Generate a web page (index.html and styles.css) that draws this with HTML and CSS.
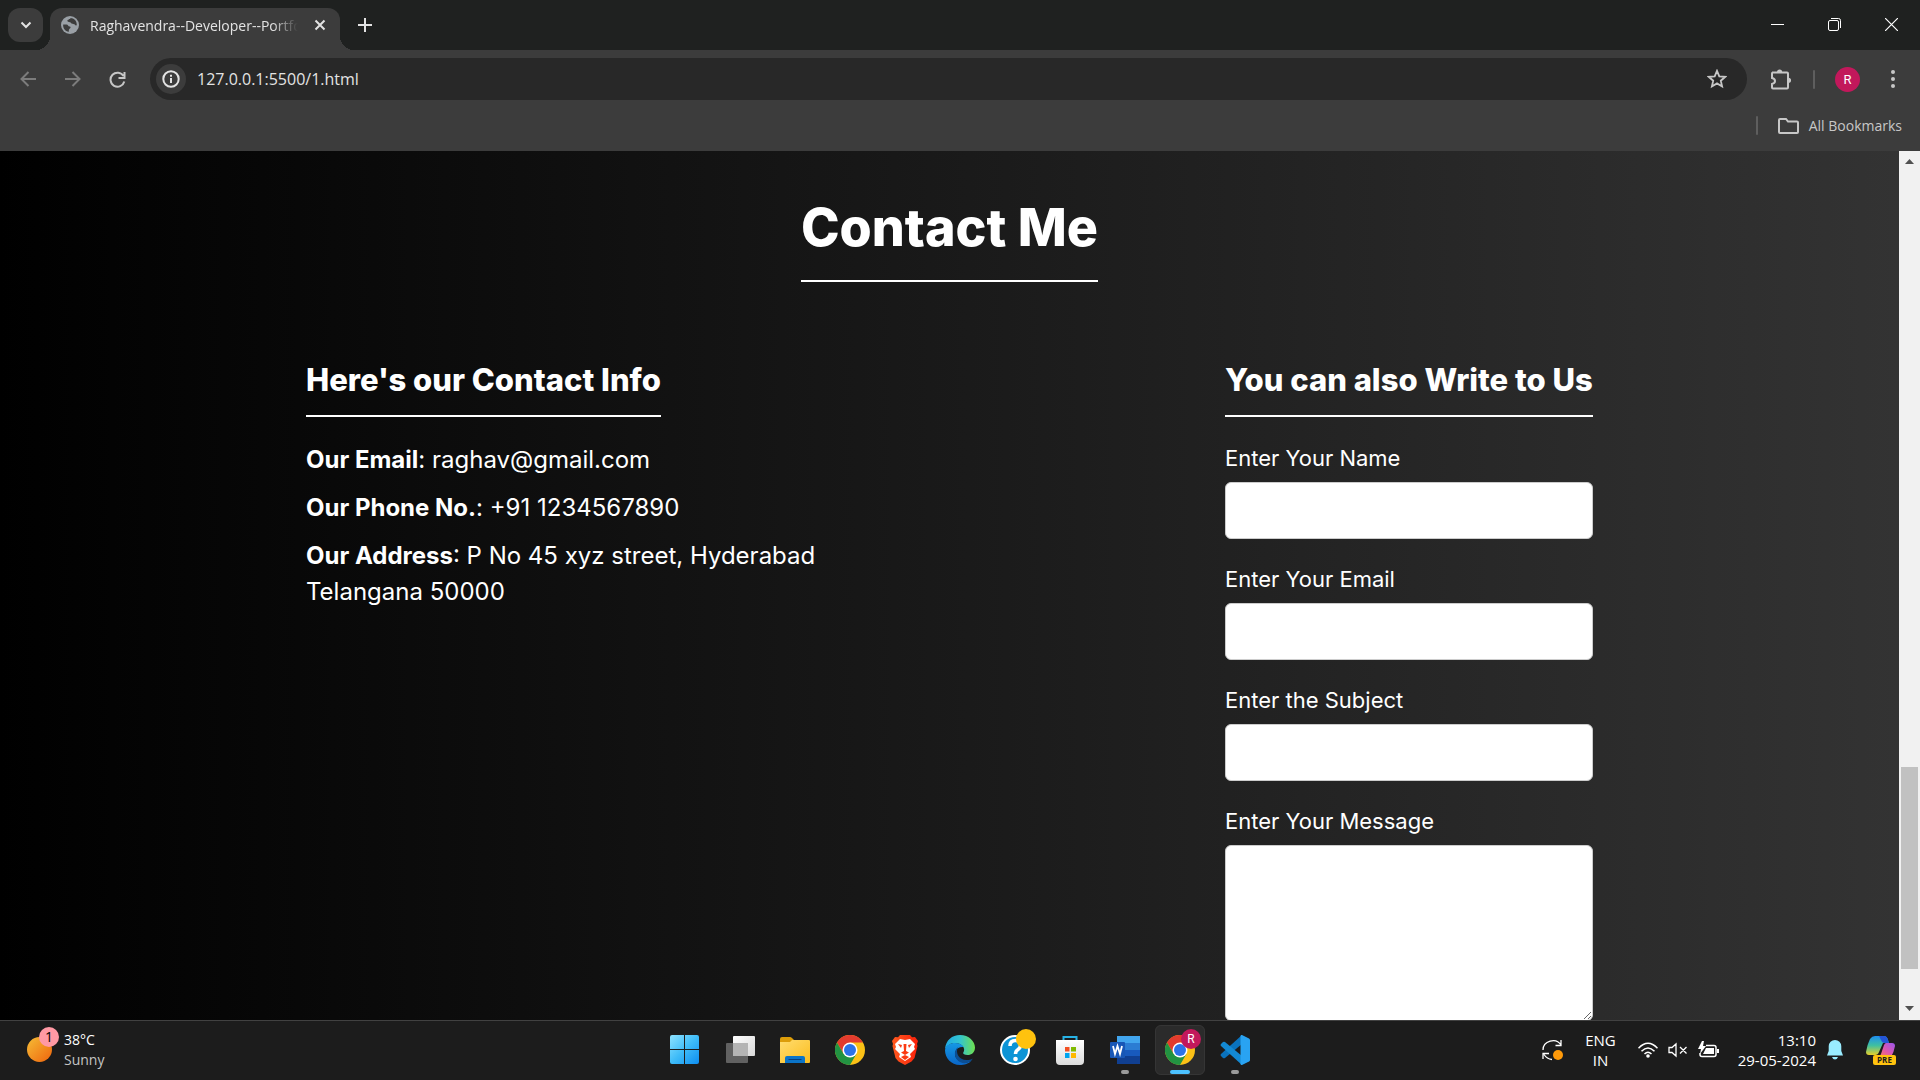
FILE: index.html
```html
<!DOCTYPE html>
<html lang="en">
<head>
<meta charset="utf-8">
<meta name="viewport" content="width=device-width, initial-scale=1">
<title>Raghavendra--Developer--Portfolio</title>
<link rel="stylesheet" href="styles.css">
</head>
<body>
<svg class="defs" aria-hidden="true">
  <defs>
    <linearGradient id="win" x1="0" y1="0" x2="1" y2="1"><stop offset="0" stop-color="#8fe3ff"/><stop offset=".5" stop-color="#3fbcf8"/><stop offset="1" stop-color="#0d8df0"/></linearGradient>
    <linearGradient id="fold" x1="0" y1="0" x2="1" y2="1"><stop offset="0" stop-color="#ffdc6e"/><stop offset="1" stop-color="#fbbd1f"/></linearGradient>
    <linearGradient id="tv" x1="0" y1="0" x2="1" y2="1"><stop offset="0" stop-color="#fff"/><stop offset="1" stop-color="#d8d8d8"/></linearGradient>
    <linearGradient id="brave" x1="0" x2="1"><stop offset="0" stop-color="#ff5a1f"/><stop offset="1" stop-color="#f9200a"/></linearGradient>
    <linearGradient id="edgeTop" x1="0" x2="1"><stop offset="0" stop-color="#1fa9e6"/><stop offset=".5" stop-color="#33c4cf"/><stop offset="1" stop-color="#6fe04f"/></linearGradient>
    <linearGradient id="edgeLow" x1="0" y1="0" x2="0" y2="1"><stop offset="0" stop-color="#1598e4"/><stop offset="1" stop-color="#0a66c8"/></linearGradient>
    <linearGradient id="store" x1="0" y1="0" x2="0" y2="1"><stop offset="0" stop-color="#fff"/><stop offset="1" stop-color="#dcdcdc"/></linearGradient>
    <linearGradient id="sun" x1="0" y1="0" x2="1" y2="1"><stop offset="0" stop-color="#f6bd36"/><stop offset="1" stop-color="#ee640d"/></linearGradient>
    <linearGradient id="copA" x1="0" y1="0" x2="0" y2="1"><stop offset="0" stop-color="#1e8ef0"/><stop offset=".5" stop-color="#3fc0a0"/><stop offset="1" stop-color="#e6d02a"/></linearGradient>
    <linearGradient id="copB" x1="1" y1="0" x2="0" y2="1"><stop offset="0" stop-color="#9a56ee"/><stop offset=".55" stop-color="#e258a8"/><stop offset="1" stop-color="#fb8a4a"/></linearGradient>
    <symbol id="chrome" viewBox="0 0 30 30">
      <circle cx="15" cy="15" r="15" fill="#fbc116"/>
      <path d="M2 7.500A15 15 0 0 1 28 7.500H15L8.500 18.750Z" fill="#e33b2e"/>
      <path d="M2 7.500A15 15 0 0 0 15 30L21.500 18.750H8.500Z" fill="#229342"/>
      <circle cx="15" cy="15" r="7.500" fill="#fff"/>
      <circle cx="15" cy="15" r="6" fill="#2c73e8"/>
    </symbol>
  </defs>
</svg>

<header class="tabstrip">
  <button class="tab-search" aria-label="Search tabs"><svg width="12" height="8" viewBox="0 0 12 8"><path d="M1.500 1.500 6 6 10.500 1.500" fill="none" stroke="#e3e3e3" stroke-width="2"/></svg></button>
  <div class="tab">
    <svg width="18" height="18" viewBox="0 0 18 18"><circle cx="9" cy="9" r="9" fill="#9aa0a6"/><path d="M2.200 8.500h3.300c1.700 0 1.500 2 3.200 2 1.300 0 1 1.400.2 2-.9.700-1.300 1.700-1 3.300C4 15.500 1.700 12 2.200 8.500zM9.500 2c-.3 1.600-1.200 1.600-2.300 1.700-1 .1-1.200 1.600-.1 2 1.300.4 2.400.4 3.200 1.500 1 1.300 3 .4 3.500 1.400.4.900 1.200 1 2 .7C16 5 13 2 9.500 2z" fill="#3c3c3c"/></svg>
    <span class="tab-title">Raghavendra--Developer--Portfolio</span>
    <button class="tab-close" aria-label="Close tab"><svg width="12" height="12" viewBox="0 0 12 12"><path d="m1.500 1.500 9 9m0-9-9 9" stroke="#e3e3e3" stroke-width="2"/></svg></button>
  </div>
  <button class="new-tab" aria-label="New tab"><svg width="14" height="14" viewBox="0 0 14 14"><path d="M7 0v14M0 7h14" stroke="#e3e3e3" stroke-width="2"/></svg></button>
  <div class="window-controls">
    <button aria-label="Minimize"><svg width="13" height="13" viewBox="0 0 13 13"><path d="M0 6.500h13" stroke="#fff"/></svg></button>
    <button aria-label="Restore"><svg width="13" height="13" viewBox="0 0 13 13"><rect x=".5" y="2.500" width="10" height="10" rx="1.500" fill="none" stroke="#fff"/><path d="M3 .500h7.500a2 2 0 0 1 2 2V10" fill="none" stroke="#fff"/></svg></button>
    <button aria-label="Close"><svg width="13" height="13" viewBox="0 0 13 13"><path d="m0 0 13 13M13 0 0 13" stroke="#fff" stroke-width="1.200"/></svg></button>
  </div>
</header>

<nav class="toolbar" aria-label="Browser toolbar">
  <button class="tool" aria-label="Back"><svg width="16" height="16" viewBox="0 0 16 16"><path d="M16 8H2m6.500-7L1.500 8l7 7" fill="none" stroke="#7c7c7c" stroke-width="2"/></svg></button>
  <button class="tool" aria-label="Forward"><svg width="16" height="16" viewBox="0 0 16 16"><path d="M0 8h14M7.500 1l7 7-7 7" fill="none" stroke="#7c7c7c" stroke-width="2"/></svg></button>
  <button class="tool" aria-label="Reload"><svg width="17" height="17" viewBox="0 0 17 17"><path d="M14.500 5A7 7 0 1 0 15.300 10.500M15.500 1v6H9.500" fill="none" stroke="#c7c7c7" stroke-width="2"/></svg></button>
  <div class="omnibox">
    <button class="site-info" aria-label="Site information"><svg width="18" height="18" viewBox="0 0 18 18"><circle cx="9" cy="9" r="7.700" fill="none" stroke="#e3e3e3" stroke-width="2"/><path d="M9 8v5M9 4.700v2" stroke="#e3e3e3" stroke-width="2"/></svg></button>
    <input class="address" type="text" aria-label="Address" value="127.0.0.1:5500/1.html">
    <button class="star" aria-label="Bookmark this page"><svg width="20" height="20" viewBox="0 0 20 20"><path d="m10 1.800 2.300 5.500 6 .5-4.500 3.900 1.300 5.800-5.100-3.100-5.100 3.100 1.300-5.800L1.700 7.800l6-.5z" fill="none" stroke="#c7c7c7" stroke-width="1.800"/></svg></button>
  </div>
  <button class="tool extensions" aria-label="Extensions"><svg width="21" height="21" viewBox="0 0 21 21"><path d="M2 3.500h15q1 0 1 1v14q0 1-1 1H3q-1 0-1-1v-3.500c4-1 4-5 0-6V4.500q0-1 1-1z" fill="none" stroke="#c7c7c7" stroke-width="2"/><path d="M7 3a2.600 2.600 0 0 1 5.200 0zM18.500 8.800a2.600 2.600 0 0 1 0 5.200z" fill="#c7c7c7"/></svg></button>
  <span class="divider"></span>
  <button class="tool" aria-label="Profile"><span class="avatar">R</span></button>
  <button class="tool" aria-label="Menu"><svg width="4" height="18" viewBox="0 0 4 18" fill="#c7c7c7"><circle cx="2" cy="2" r="2"/><circle cx="2" cy="9" r="2"/><circle cx="2" cy="16" r="2"/></svg></button>
</nav>

<div class="bookmarks">
  <span class="divider"></span>
  <button class="all-bookmarks"><svg width="21" height="16" viewBox="0 0 21 16"><path d="M1 2q0-1 1-1h6l2 2.500h9q1 0 1 1V14q0 1-1 1H2q-1 0-1-1z" fill="none" stroke="#c7c7c7" stroke-width="2"/></svg>All Bookmarks</button>
</div>

<div class="viewport">
  <main class="page">
    <h1 class="title">Contact Me</h1>
    <div class="columns">
      <section class="info">
        <h2 class="heading">Here's our Contact Info</h2>
        <p><b>Our Email</b>: raghav@gmail.com</p>
        <p><b>Our Phone No.</b>: +91 1234567890</p>
        <p><b>Our Address</b>: P No 45 xyz street, Hyderabad Telangana 50000</p>
      </section>
      <form class="write">
        <h2 class="heading">You can also Write to Us</h2>
        <label for="name">Enter Your Name</label>
        <input class="field" id="name" type="text">
        <label for="email">Enter Your Email</label>
        <input class="field" id="email" type="email">
        <label for="subject">Enter the Subject</label>
        <input class="field" id="subject" type="text">
        <label for="message">Enter Your Message</label>
        <textarea class="field message" id="message"></textarea>
      </form>
    </div>
  </main>
  <div class="scrollbar" aria-hidden="true">
    <svg viewBox="0 0 21 21"><path d="m6 13 4.500-5 4.500 5z" fill="#505050"/></svg>
    <div class="track"><div class="thumb"></div></div>
    <svg viewBox="0 0 21 21"><path d="m6 7 4.500 5L15 7z" fill="#505050"/></svg>
  </div>
</div>

<footer class="taskbar">
  <button class="weather">
    <span class="weather-icon"><svg width="25" height="25" viewBox="0 0 25 25"><circle cx="12.500" cy="12.500" r="12.500" fill="url(#sun)"/></svg><span class="count">1</span></span>
    <span class="weather-text">38°C<span class="muted">Sunny</span></span>
  </button>
  <div class="apps">
    <button class="app" aria-label="Start"><svg viewBox="0 0 30 30"><path d="M2 0h12v14H0V2q0-2 2-2zM15 0h12q2 0 2 2v12H15zM0 15h14v14H2q-2 0-2-2zM15 15h14v12q0 2-2 2H15z" fill="url(#win)"/></svg></button>
    <button class="app" aria-label="Task view"><svg viewBox="0 0 30 30"><rect x="1" y="8" width="22" height="20" rx="1" fill="#616161"/><rect x="8" y="1" width="22" height="20" rx="1" fill="url(#tv)"/><path d="M8 8h15v13H8z" fill="#b4b4b4"/></svg></button>
    <button class="app" aria-label="File Explorer"><svg viewBox="0 0 30 30"><path d="M0 4q0-2 2-2h8q1 0 2 1l2 2v6H0z" fill="#dc9d09"/><path d="M0 7h10l2-2h17q1 0 1 1v21q0 1-1 1H0z" fill="url(#fold)"/><path d="M5 28v-5q0-2 2-2h16q2 0 2 2v5z" fill="#0b74c8"/><path d="M8.500 24.500h13" stroke="#073f7e"/></svg></button>
    <button class="app" aria-label="Chrome"><svg viewBox="0 0 30 30"><use href="#chrome"/></svg></button>
    <button class="app" aria-label="Brave"><svg viewBox="0 0 30 30"><path d="M10 0h10l2 2.300 3-.3 3 4-1 3 .5 2-3 12-3 3.500-6.500 3.500-6.500-3.500L5.500 23l-3-12 .5-2-1-3 3-4 3 .3z" fill="url(#brave)"/><path d="m10 4 5 1 5-1 5 5-1 3 1 2-5 5 1 3-6 4-6-4 1-3-5-5 1-2-1-3z" fill="#fff"/><path d="m8 9 4 1-1 3zM22 9l-4 1 1 3zM13.500 9h3l-.5 7 3 1.500-4 2.500-4-2.500 3-1.500zM11 22l4-2 4 2-4 3z" fill="#fb3a12"/></svg></button>
    <button class="app" aria-label="Edge"><svg viewBox="0 0 30 30"><path d="M0 14C1 5 7 0 15 0c9 0 15 6.500 15 12.500 0 5-3.500 7.500-7.500 7.500-3 0-4.800-1.200-4.300-2.300C21.500 13 16 8 10 8 5 8 2 11 0 14z" fill="url(#edgeTop)"/><path d="M0 15C1 10 5 8 10 8c4 0 7 1.500 8.500 4C12 11 7 18 12 24c3 4 10 5 15 1-3 4-8 5-12 5C6 30 0 23 0 15z" fill="url(#edgeLow)"/><path d="M13 12c-5 4-4 13 3 15.500 4 1.500 9 .5 12-4-2 1-4 1.500-6.500 1.500C14 25 10 18 13 12z" fill="#0b4e94"/></svg></button>
    <button class="app" aria-label="Help"><svg viewBox="0 0 30 30"><circle cx="15" cy="15" r="14" fill="#0d94d6" stroke="#fff" stroke-width="2"/><path d="M10 11q0-5.500 5.500-5.500 5 0 5 4.500 0 3-2.500 4.500t-2.500 4.500" fill="none" stroke="#fff" stroke-width="3.500"/><circle cx="15.500" cy="24" r="2.300" fill="#fff"/></svg><span class="badge amber"></span></button>
    <button class="app" aria-label="Microsoft Store"><svg viewBox="0 0 30 30"><path d="M8.500 6V2h13v4" fill="none" stroke="#27b3e6" stroke-width="2"/><path d="M1 5h28v21q0 4-4 4H5q-4 0-4-4z" fill="url(#store)"/><path d="M10 12h4.500v4.500H10z" fill="#f25022"/><path d="M16 12h5v4.500h-5z" fill="#7fba00"/><path d="M10 18h4.500v5H10z" fill="#00a4ef"/><path d="M16 18h5v5h-5z" fill="#ffb900"/></svg></button>
    <button class="app running" aria-label="Word"><svg viewBox="0 0 30 30"><path d="M7 1h23v7H7z" fill="#41a5ee"/><path d="M7 8h23v7H7z" fill="#2b7cd3"/><path d="M7 15h23v6H7z" fill="#185abd"/><path d="M7 21h23v8H7z" fill="#103f91"/><rect y="7" width="15" height="16" rx="1" fill="#1857b6"/><path d="m3 11 2 8 2.500-8 2.500 8 2-8" fill="none" stroke="#fff" stroke-width="1.800"/></svg></button>
    <button class="app active" aria-label="Chrome, profile R"><svg viewBox="0 0 30 30"><use href="#chrome"/></svg><span class="badge pink">R</span></button>
    <button class="app running" aria-label="Visual Studio Code"><svg viewBox="0 0 30 30"><path d="M22 0 1 19q-1 1 0 2l2 2q1 .5 2 0L22 9z" fill="#0a72bd"/><path d="M22 30 1 11q-1-1 0-2l2-2q1-.5 2 0l17 14z" fill="#1389d3"/><path d="m22 0 7 3.500q1 .5 1 1.500v20q0 1-1 1.500L22 30q-1 .3-1.500-1V1q.5-1.300 1.500-1z" fill="#29a3f2"/></svg></button>
  </div>
  <div class="tray">
    <button aria-label="Updates"><svg width="22" height="22" viewBox="0 0 22 22"><path d="M1 11C1 2 14-2 19 6m0-5v5.500h-5.500M10 20.500q-5-.5-8-5M1 20v-5.500h6" fill="none" stroke="#fff" stroke-width="1.300"/><circle cx="16" cy="16" r="5" fill="#ff9a0a"/></svg></button>
    <button class="lang">ENG<br>IN</button>
    <button class="status" aria-label="Network, sound and battery">
      <svg width="20" height="16" viewBox="0 0 20 16"><g fill="none" stroke="#fff" stroke-width="1.500"><path d="M.5 6.200q9.500-9.800 19 0M3.500 9.200q6.500-6.600 13 0M6.500 12q3.500-3.500 7 0"/></g><circle cx="10" cy="14" r="1.800" fill="#fff"/></svg>
      <svg width="20" height="16" viewBox="0 0 20 16"><path d="M1 5.500h3L8 2v12l-4-3.500H1zM12 5l6.500 6.500m0-6.500L12 11.500" fill="none" stroke="#fff" stroke-width="1.300"/></svg>
      <svg width="21" height="18" viewBox="0 0 21 18"><path d="M8 4.500h8q2 0 2 2v7q0 2-2 2H4q-2 0-2-2V12" fill="none" stroke="#fff" stroke-width="1.500"/><path d="M8 7h8v6H5zM19 8h2v4h-2zM4 0 0 8h3L2 13l6-8H5l1-5z" fill="#fff"/></svg>
    </button>
    <button class="clock">13:10<br>29-05-2024</button>
    <button class="bell" aria-label="Notifications"><svg width="16" height="20" viewBox="0 0 16 20"><path d="M8 0a6.300 6.300 0 0 1 6.300 6.300V11L16 15.500H0L1.700 11V6.300A6.300 6.300 0 0 1 8 0zM5 17h6q-1 2.500-3 2.500T5 17z" fill="#99ecff"/></svg></button>
    <button class="copilot" aria-label="Copilot"><svg width="30" height="30" viewBox="0 0 30 30"><path d="M9 1h9q3 0 4 4l1 3h-6l-4 9q-1 3-4 3H3q-3 0-3-3Q1 10 4 4q2-3 5-3z" fill="url(#copA)"/><path d="M13 1h5q3 0 4 4l1 3h-5q-2 0-3-3z" fill="#2455d6"/><path d="M20 8h6q3 0 3 3-1 6-4 11H11q3 0 4-3l3-9q1-2 2-2z" fill="url(#copB)"/></svg><span class="pre">PRE</span></button>
  </div>
</footer>
</body>
</html>
```
FILE: styles.css
```css
* { box-sizing: border-box; }

body {
  margin: 0;
  height: 100vh;
  display: grid;
  grid-template-rows: auto auto auto minmax(0, 1fr) auto;
  background: #3c3c3c;
  color: #e3e3e3;
  font-family: "Open Sans", "Noto Sans", sans-serif;
  font-size: 14px;
}

button {
  display: flex;
  align-items: center;
  justify-content: center;
  padding: 0;
  border: 0;
  background: none;
  color: inherit;
  font: inherit;
}

svg { display: block; flex: none; }
.defs { position: absolute; width: 0; height: 0; }

/* Tab strip */
.tabstrip {
  display: flex;
  height: 50px;
  padding: 8px 0 0 8px;
  background: #1f2120;
}
.tab-search {
  width: 35px;
  height: 34px;
  border-radius: 12px;
  background: #3c3c3c;
}
.tab {
  position: relative;
  display: flex;
  align-items: center;
  gap: 11px;
  width: 290px;
  margin-left: 7px;
  padding: 0 13px 8px 11px;
  border-radius: 12px 12px 0 0;
  background: #3c3c3c;
}
.tab::before,
.tab::after {
  content: "";
  position: absolute;
  bottom: 0;
  width: 14px;
  height: 14px;
}
.tab::before { right: 100%; background: radial-gradient(circle at 0 0, transparent 14px, #3c3c3c 14px); }
.tab::after { left: 100%; background: radial-gradient(circle at 100% 0, transparent 14px, #3c3c3c 14px); }
.tab-title {
  flex: 1;
  overflow: hidden;
  white-space: nowrap;
  mask-image: linear-gradient(to right, #000 86%, transparent 98%);
}
.tab-close { width: 14px; height: 24px; }
.new-tab { width: 34px; height: 34px; margin-left: 8px; }
.window-controls { display: flex; margin: -8px 0 0 auto; }
.window-controls button { width: 57px; height: 48px; }

/* Address row */
.toolbar {
  display: flex;
  align-items: center;
  height: 58px;
  padding: 0 5px;
}
.tool { width: 45px; height: 42px; }
.omnibox {
  flex: 1;
  display: flex;
  align-items: center;
  height: 42px;
  margin: 0 11px 0 10px;
  padding: 0 15px 0 6px;
  border-radius: 21px;
  background: #282828;
}
.site-info {
  width: 30px;
  height: 30px;
  border-radius: 50%;
  background: #3c3c3c;
}
.address {
  flex: 1;
  min-width: 0;
  padding: 0 11px;
  border: 0;
  outline: 0;
  background: none;
  color: #e3e3e3;
  font: 16px "Open Sans", "Noto Sans", sans-serif;
}
.star { width: 30px; height: 30px; }
.divider {
  width: 2px;
  height: 19px;
  margin: 0 10px;
  border-radius: 1px;
  background: #5e5e5e;
}
.avatar {
  width: 25px;
  border-radius: 50%;
  background: #c2185b;
  color: #fff;
  font: 13px/25px Roboto, sans-serif;
}

/* Bookmarks row */
.bookmarks {
  display: flex;
  align-items: center;
  justify-content: flex-end;
  gap: 10px;
  height: 43px;
  padding: 0 18px 8px;
  color: #c7c7c7;
}
.all-bookmarks { gap: 10px; }

/* Web page */
.viewport {
  display: grid;
  grid-template-columns: minmax(0, 1fr) 21px;
  overflow: hidden;
}
.page {
  overflow: hidden;
  padding: 41px 24px 0;
  background: linear-gradient(to right, #000, #333);
  color: #fff;
  font-family: Inter, sans-serif;
}
.title {
  width: fit-content;
  margin: 0 auto 74px;
  padding-bottom: 16px;
  border-bottom: 2px solid #fff;
  font-size: 52px;
  font-weight: 800;
  line-height: 72px;
}
.columns {
  display: flex;
  justify-content: space-between;
  gap: 48px;
  max-width: 1287px;
  margin: 0 auto;
}
.heading {
  width: fit-content;
  margin: 0 0 25px;
  padding-bottom: 11px;
  border-bottom: 2px solid #fff;
  font-size: 31px;
  font-weight: 800;
  line-height: 48px;
  white-space: nowrap;
}
.info { flex: 0 1 560px; }
.info p {
  margin: 0 0 12px;
  font-size: 24px;
  line-height: 36px;
}
.write { flex: 0 0 368px; }
.write .heading { width: auto; }
.write label {
  display: block;
  margin-bottom: 7px;
  font-size: 22px;
  line-height: 33px;
}
.field {
  display: block;
  width: 100%;
  height: 57px;
  margin: 0 0 24px;
  padding: 12px;
  border: 1px solid #ccc;
  border-radius: 6px;
  background: #fff;
  font: 22px Inter, sans-serif;
}
.message { height: 176px; resize: both; }

.scrollbar {
  display: grid;
  grid-template-rows: 21px 1fr 21px;
  background: #f1f1f1;
}
.track {
  display: grid;
  grid-template-rows: 595fr 202fr 30fr;
  padding: 0 2px;
}
.thumb { grid-row: 2; background: #c1c1c1; }

/* Taskbar */
.taskbar {
  display: grid;
  grid-template-columns: 1fr auto 1fr;
  align-items: center;
  height: 60px;
  padding-bottom: 2px;
  border-top: 1px solid #414141;
  background: #1c1c1c;
  color: #fff;
  line-height: 20px;
}
.weather { justify-self: start; gap: 12px; margin-left: 27px; }
.weather-icon { position: relative; }
.weather-text { display: grid; text-align: left; }
.muted { color: #c4c4c4; }
.count {
  position: absolute;
  top: -10px;
  left: 12px;
  width: 20px;
  border-radius: 50%;
  background: #ff99a4;
  color: #000;
}
.apps { display: flex; gap: 5px; }
.app {
  position: relative;
  width: 50px;
  height: 50px;
  border-radius: 6px;
}
.app > svg { width: 30px; height: 30px; }
.app.active { background: #2b2b2b; outline: 1px solid #353535; outline-offset: -1px; }
.app.running::after,
.app.active::after {
  content: "";
  position: absolute;
  bottom: 1px;
  left: 21px;
  width: 8px;
  height: 4px;
  border-radius: 2px;
  background: #9a9a9a;
}
.app.active::after { left: 15px; width: 20px; background: #4cc2ff; }
.badge {
  position: absolute;
  top: 4px;
  right: 4px;
  width: 20px;
  height: 20px;
  border-radius: 50%;
}
.amber { background: #ffc20e; }
.pink { background: #c2185b; font: 12px/20px Roboto, sans-serif; }
.tray {
  display: flex;
  align-items: center;
  justify-self: end;
  padding-right: 24px;
}
.lang,
.clock { font-size: 15px; }
.lang { margin: 0 22px 0 21px; }
.status { gap: 10px; }
.clock { margin: 0 11px 0 19px; text-align: right; }
.copilot { position: relative; margin-left: 23px; }
.pre {
  position: absolute;
  right: 0;
  bottom: 0;
  width: 23px;
  border-radius: 2px;
  background: #ffc20e;
  color: #1c1c1c;
  font: bold 8px/10px "Open Sans", sans-serif;
}
```
